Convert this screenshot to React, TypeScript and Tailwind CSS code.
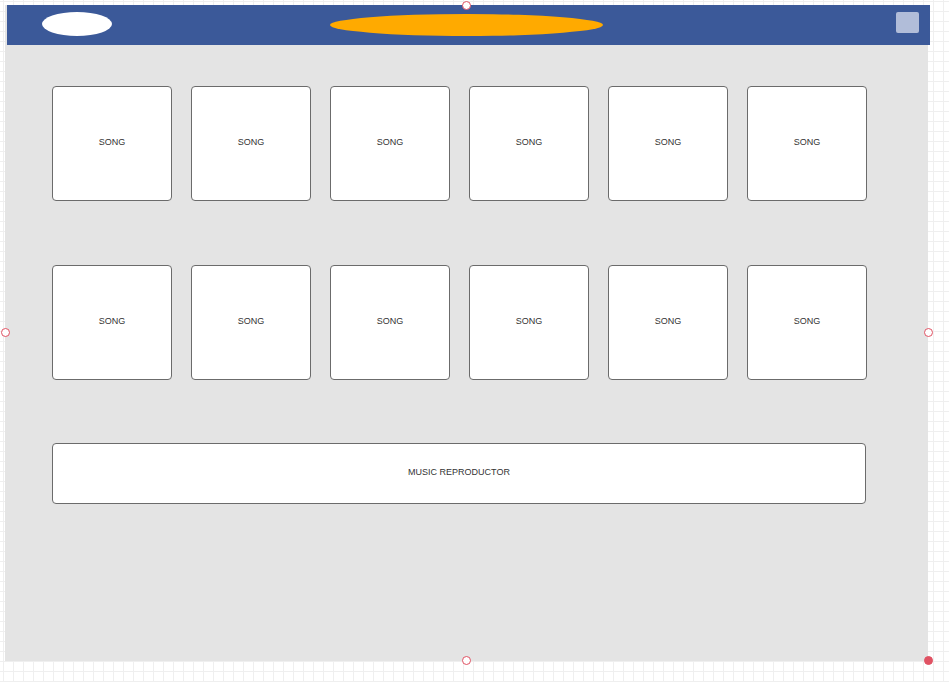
import React from "react";

function Card({ label }: { label: string }) {
  return (
    <div className="w-[120px] h-[115px] bg-white border border-[#6b6b6b] rounded-[4px] flex items-center justify-center pb-[2px] text-[9px] text-[#333333] font-['Liberation_Sans',Arial,sans-serif]">
      {label}
    </div>
  );
}

function Handle({ className, filled }: { className: string; filled?: boolean }) {
  return (
    <div
      className={`absolute w-[9px] h-[9px] rounded-full border border-[#e05263] ${filled ? "bg-[#e05263]" : "bg-white"} ${className}`}
    />
  );
}

export default function App() {
  const row = Array.from({ length: 6 });
  return (
    <div className="relative w-[949px] h-[682px] overflow-hidden bg-white bg-[linear-gradient(to_right,#efefef_1px,transparent_1px),linear-gradient(to_bottom,#efefef_1px,transparent_1px)] bg-[size:10px_10px] bg-[position:3px_1px] font-['Liberation_Sans',Arial,sans-serif]">
      <div className="ml-[5px] mt-[5px] w-[923px] h-[656px] bg-[#e4e4e4] flex flex-col">
        <div className="ml-[2px] w-[923px] h-[40px] shrink-0 bg-[#3b5999] flex items-center">
          <div className="ml-[35px] w-[70px] h-[24px] rounded-[50%] bg-white -mt-[2px]" />
          <div className="ml-[218px] w-[273px] h-[22px] rounded-[50%] bg-[#ffaa00]" />
          <div className="ml-[293px] w-[23px] h-[21px] rounded-[2px] bg-[#b1bdd9] -mt-[6px]" />
        </div>
        <div className="ml-[47px] mt-[41px] flex flex-col">
          <div className="flex gap-[19px]">
            {row.map((_, i) => (
              <Card key={i} label="SONG" />
            ))}
          </div>
          <div className="flex gap-[19px] mt-[64px]">
            {row.map((_, i) => (
              <Card key={i} label="SONG" />
            ))}
          </div>
          <div className="mt-[63px] w-[814px] h-[61px] bg-white border border-[#6b6b6b] rounded-[4px] flex items-center justify-center pb-[2px] text-[9px] text-[#333333]">
            MUSIC REPRODUCTOR
          </div>
        </div>
      </div>
      <Handle className="left-[462px] top-[1px]" />
      <Handle className="left-[1px] top-[328px]" />
      <Handle className="left-[924px] top-[328px]" />
      <Handle className="left-[462px] top-[656px]" />
      <Handle className="left-[924px] top-[656px]" filled />
    </div>
  );
}
